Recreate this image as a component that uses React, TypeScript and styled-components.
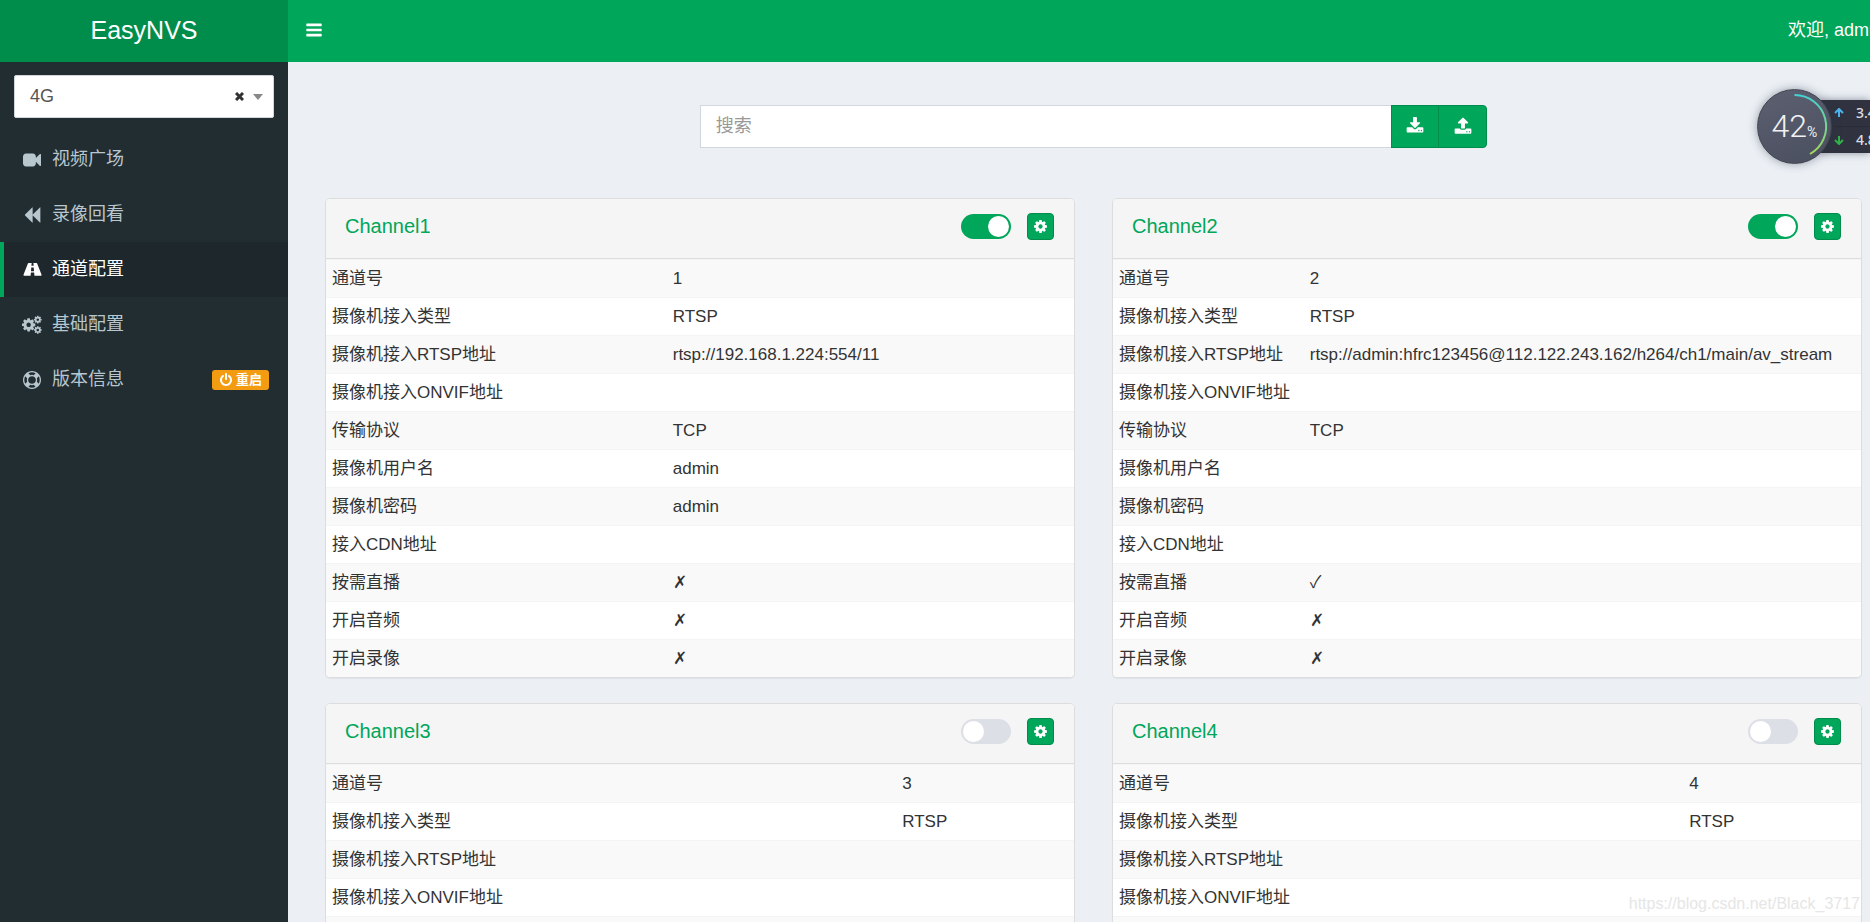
import React, { useState } from 'react';
import styled, { createGlobalStyle, css } from 'styled-components';

const green = '#00a65a';
const darkGreen = '#008d4c';

const GlobalStyle = createGlobalStyle`
  *, *::before, *::after { box-sizing: border-box; }
  html, body { margin: 0; overflow: hidden; }
  body {
    background: #ecf0f5;
    color: #333;
    font: 17px/25px "Liberation Sans", "Noto Sans CJK SC", sans-serif;
  }
  button, input, select { font: inherit; }
  a { text-decoration: none; color: inherit; }
`;

const iconPaths = {
  bars: 'M1664 1344v128q0 26-19 45t-45 19h-1408q-26 0-45-19t-19-45v-128q0-26 19-45t45-19h1408q26 0 45 19t19 45zm0-512v128q0 26-19 45t-45 19h-1408q-26 0-45-19t-19-45v-128q0-26 19-45t45-19h1408q26 0 45 19t19 45zm0-512v128q0 26-19 45t-45 19h-1408q-26 0-45-19t-19-45v-128q0-26 19-45t45-19h1408q26 0 45 19t19 45z',
  cog: 'M1152 896q0-106-75-181t-181-75-181 75-75 181 75 181 181 75 181-75 75-181zm512-109v222q0 12-8 23t-20 13l-185 28q-19 54-39 91 35 50 107 138 10 12 10 25t-9 23q-27 37-99 108t-94 71q-12 0-26-9l-138-108q-44 23-91 38-16 136-29 186-7 28-36 28h-222q-14 0-24.500-8.500t-11.500-21.500l-28-184q-49-16-90-37l-141 107q-10 9-25 9-14 0-25-11-126-114-165-168-7-10-7-23 0-12 8-23 15-21 51-66.500t54-70.500q-27-50-41-99l-183-27q-13-2-21-12.500t-8-23.500v-222q0-12 8-23t19-13l186-28q14-46 39-92-40-57-107-138-10-12-10-24 0-10 9-23 26-36 98.500-107.500t94.500-71.500q13 0 26 10l138 107q44-23 91-38 16-136 29-186 7-28 36-28h222q14 0 24.500 8.500t11.500 21.500l28 184q49 16 90 37l142-107q9-9 24-9 13 0 25 10 129 119 165 170 7 8 7 22 0 12-8 23-15 21-51 66.500t-54 70.500q26 50 41 98l183 28q13 2 21 12.500t8 23.500z',
  video: 'M1792 352v1088q0 42-39 59-13 5-25 5-27 0-45-19l-403-403v166q0 119-84.500 203.500t-203.500 84.500h-704q-119 0-203.500-84.500t-84.500-203.500v-704q0-119 84.500-203.500t203.500-84.500h704q119 0 203.500 84.500t84.500 203.500v165l403-402q18-19 45-19 12 0 25 5 39 17 39 59z',
  backward: 'M1683 141q19-19 32-13t13 32v1472q0 26-13 32t-32-13l-710-710q-9-9-13-19v710q0 26-13 32t-32-13l-710-710q-19-19-19-45t19-45l710-710q19-19 32-13t13 32v710q4-10 13-19z',
  road: 'M1111 1001v-4l-24-320q-1-13-11-22.500t-23-9.500h-186q-13 0-23 9.500t-11 22.500l-24 320v4q-1 12 8 20t21 8h244q12 0 21-8t8-20zm762 407q0 73-46 73h-704q13 0 22-9.500t8-22.500l-20-256q-1-13-11-22.500t-23-9.500h-272q-13 0-23 9.500t-11 22.500l-20 256q-1 13 8 22.500t22 9.500h-704q-46 0-46-73 0-54 26-116l417-1044q8-19 26-33t38-14h339q-13 0-23 9.500t-11 22.500l-15 192q-1 14 8 23t22 9h166q13 0 22-9t8-23l-15-192q-1-13-11-22.500t-23-9.500h339q20 0 38 14t26 33l417 1044q26 62 26 116z',
  ring: 'M896 0q182 0 348 71t286 191 191 286 71 348-71 348-191 286-286 191-348 71-348-71-286-191-191-286-71-348 71-348 191-286 286-191 348-71zm0 128q-190 0-361 90l194 194q82-28 167-28t167 28l194-194q-171-90-361-90zm-678 1129l194-194q-28-82-28-167t28-167l-194-194q-90 171-90 361t90 361zm678 407q190 0 361-90l-194-194q-82 28-167 28t-167-28l-194 194q171 90 361 90zm0-384q159 0 271.500-112.500t112.500-271.500-112.500-271.500-271.500-112.500-271.500 112.500-112.500 271.500 112.500 271.500 271.500 112.500zm484-217l194 194q90-171 90-361t-90-361l-194 194q28 82 28 167t-28 167z',
  power: 'M1664 896q0 156-61 298t-164 245-245 164-298 61-298-61-245-164-164-245-61-298q0-182 80.500-343t226.500-270q43-32 95.500-25t83.500 50q32 42 24.500 94.500t-49.500 84.500q-98 74-151.500 181t-53.500 228q0 104 40.500 198.500t109.500 163.500 163.500 109.500 198.500 40.500 198.500-40.500 163.500-109.500 109.500-163.500 40.500-198.500q0-121-53.500-228t-151.500-181q-42-32-49.500-84.500t24.500-94.500q31-43 84-50t95 25q146 109 226.500 270t80.500 343zm-640-768v640q0 52-38 90t-90 38-90-38-38-90v-640q0-52 38-90t90-38 90 38 38 90z',
  download: 'M1344 1344q0-26-19-45t-45-19-45 19-19 45 19 45 45 19 45-19 19-45zm256 0q0-26-19-45t-45-19-45 19-19 45 19 45 45 19 45-19 19-45zm128-224v320q0 40-28 68t-68 28h-1472q-40 0-68-28t-28-68v-320q0-40 28-68t68-28h465l135 136q58 56 136 56t136-56l136-136h464q40 0 68 28t28 68zm-325-569q17 41-14 70l-448 448q-18 19-45 19t-45-19l-448-448q-31-29-14-70 17-39 59-39h256v-448q0-26 19-45t45-19h256q26 0 45 19t19 45v448h256q42 0 59 39z',
  upload: 'M1344 1472q0-26-19-45t-45-19-45 19-19 45 19 45 45 19 45-19 19-45zm256 0q0-26-19-45t-45-19-45 19-19 45 19 45 45 19 45-19 19-45zm128-224v320q0 40-28 68t-68 28h-1472q-40 0-68-28t-28-68v-320q0-40 28-68t68-28h427q21 56 70.500 92t110.500 36h256q61 0 110.500-36t70.500-92h427q40 0 68 28t28 68zm-325-648q-17 40-59 40h-256v448q0 26-19 45t-45 19h-256q-26 0-45-19t-19-45v-448h-256q-42 0-59-40-17-39 14-69l448-448q18-19 45-19t45 19l448 448q31 30 14 69z',
};

function Icon({ name, size = 18 }: { name: keyof typeof iconPaths; size?: number }) {
  const w = name === 'road' ? 1920 : 1792;
  return (
    <svg width={Math.round((size * w) / 1792)} height={size} viewBox={`0 0 ${w} 1792`} fill="currentColor" aria-hidden="true">
      <path d={iconPaths[name]} />
    </svg>
  );
}

function CogsIcon() {
  return (
    <svg width="20" height="20" viewBox="0 0 2000 2000" fill="currentColor" aria-hidden="true">
      <path d={iconPaths.cog} transform="translate(-115 205) scale(.87)" />
      <path d={iconPaths.cog} transform="translate(1130 20) scale(.5)" />
      <path d={iconPaths.cog} transform="translate(1130 1050) scale(.5)" />
    </svg>
  );
}

/* The page is slightly wider than the window, so its right edge runs out of view. */
const Page = styled.div`
  display: flex;
  width: calc(100vw + 30px);
  height: 100vh;
  overflow: hidden;
`;

const Sidebar = styled.aside`
  flex: 0 0 288px;
  background: #222d32;
  color: #b8c7ce;
`;

const Logo = styled.a`
  display: block;
  height: 62px;
  background: ${darkGreen};
  color: #fff;
  font-size: 25px;
  line-height: 60px;
  text-align: center;
`;

const ServerPicker = styled.div`
  position: relative;
  margin: 13px 14px 14px;
`;

const ServerSelect = styled.select`
  display: block;
  width: 100%;
  height: 43px;
  padding: 0 15px;
  appearance: none;
  border: 1px solid #d2d6de;
  border-radius: 2px;
  background: #fff;
  color: #555;
  font-size: 18px;
`;

const PickerMarks = styled.span`
  position: absolute;
  top: 0;
  right: 11px;
  height: 43px;
  display: flex;
  align-items: center;
  gap: 9px;
  color: #333;
  pointer-events: none;
`;

const Caret = styled.i`
  border: 5px solid transparent;
  border-top: 6px solid #888;
  border-bottom: 0;
`;

const Menu = styled.nav`
  display: flex;
  flex-direction: column;
`;

const MenuItem = styled.div<{ $active?: boolean }>`
  display: flex;
  align-items: center;
  height: 55px;
  padding: 0 19px 0 18px;
  border-left: 4px solid transparent;
  font-size: 18px;
  ${p => p.$active && css`
    border-left-color: ${green};
    background: #1e282c;
    color: #fff;
  `}
`;

const MenuLink = styled.a`
  display: flex;
  align-items: center;
  flex: 1;
  height: 55px;
`;

const MenuIcon = styled.span`
  display: flex;
  justify-content: center;
  width: 20px;
  margin-right: 10px;
`;

const RestartBadge = styled.button`
  display: flex;
  align-items: center;
  gap: 3px;
  height: 20px;
  padding: 0 7px;
  border: 0;
  border-radius: 3px;
  background: #f39c12;
  color: #fff;
  font-size: 13px;
  font-weight: bold;
  line-height: 20px;
`;

const Main = styled.div`
  flex: 1;
  min-width: 0;
`;

const TopBar = styled.header`
  display: flex;
  align-items: center;
  justify-content: space-between;
  height: 62px;
  padding: 0 17px 2px;
  background: ${green};
  color: #fff;
`;

const MenuToggle = styled.button`
  display: flex;
  padding: 0;
  border: 0;
  background: none;
  color: inherit;
`;

const Welcome = styled.a`
  font-size: 18px;
  white-space: nowrap;
`;

const Content = styled.main`
  padding: 43px 38px 0 37px;
`;

const SearchGroup = styled.form`
  display: flex;
  width: calc(50% + 19px);
  height: 43px;
  margin: 0 auto 50px;
`;

const SearchInput = styled.input`
  flex: 1;
  min-width: 0;
  padding: 0 15px;
  border: 1px solid #d2d6de;
  border-right: 0;
  outline: 0;
  font-size: 18px;
  &::placeholder { color: #999; }
`;

const SearchButton = styled.button`
  display: flex;
  align-items: center;
  justify-content: center;
  width: 48px;
  padding: 0 0 2px;
  border: 1px solid ${darkGreen};
  background: ${green};
  color: #fff;
  & + & { width: 49px; margin-left: -1px; border-radius: 0 4px 4px 0; }
`;

const Cards = styled.div`
  display: grid;
  grid-template-columns: repeat(2, minmax(0, 1fr));
  gap: 25px 37px;
`;

const Card = styled.section`
  overflow: hidden;
  border: 1px solid #ddd;
  border-radius: 5px;
  background: #fff;
  box-shadow: 0 1px 1px rgba(0, 0, 0, 0.05);
`;

const CardHeader = styled.header`
  display: flex;
  align-items: center;
  gap: 16px;
  height: 60px;
  padding: 0 20px 5px 19px;
  border-bottom: 1px solid #ddd;
  background: #f5f5f5;
`;

const CardTitle = styled.h2`
  flex: 1;
  margin: 0;
  color: ${green};
  font-size: 20px;
  font-weight: normal;
`;

const Switch = styled.input`
  width: 50px;
  height: 25px;
  margin: 0;
  padding: 2px;
  appearance: none;
  border-radius: 13px;
  background: #dcdfe6;
  &::before {
    content: '';
    display: block;
    width: 21px;
    height: 21px;
    border-radius: 50%;
    background: #fff;
  }
  &:checked { background: ${green}; }
  &:checked::before { margin-left: auto; }
`;

const GearButton = styled.button`
  display: flex;
  align-items: center;
  justify-content: center;
  width: 27px;
  height: 27px;
  padding: 0;
  border: 1px solid ${darkGreen};
  border-radius: 4px;
  background: ${green};
  color: #fff;
`;

const InfoTable = styled.table`
  width: 100%;
  border-collapse: separate;
  border-spacing: 0;
  th, td {
    height: 38px;
    padding: 0 6px;
    border-top: 1px solid #f4f4f4;
    font-weight: normal;
    text-align: left;
    white-space: nowrap;
  }
  tr:nth-child(odd) { background: #f9f9f9; }
`;

const Monitor = styled.aside`
  position: absolute;
  top: 89px;
  right: 0;
  display: flex;
  align-items: center;
  width: 113px;
  height: 75px;
`;

const Dial = styled.div`
  position: relative;
  z-index: 1;
  flex: 0 0 75px;
  height: 75px;
  display: flex;
  align-items: baseline;
  justify-content: center;
  border: 1px solid #40434e;
  border-radius: 50%;
  background: linear-gradient(160deg, #5c6070, #4a4f5f);
  box-shadow: 0 0 10px rgba(40, 50, 70, 0.45);
  color: #f1f1f3;
  font: 300 32px/73px Roboto, sans-serif;
  small { font-size: 14px; font-weight: 400; }
  svg { position: absolute; inset: 0; }
`;

const Speeds = styled.div`
  flex: 1;
  min-width: 0;
  height: 53px;
  margin-left: -12px;
  padding-left: 14px;
  overflow: hidden;
  background: #30333f;
  box-shadow: 0 0 8px rgba(40, 50, 70, 0.5);
`;

const Speed = styled.div`
  display: flex;
  align-items: center;
  gap: 12px;
  height: 26px;
  color: #dcdde2;
  font: 500 14px/26px "Noto Sans", sans-serif;
  white-space: nowrap;
  & + & { border-top: 1px solid #292c36; }
  svg { flex: none; }
`;

const Watermark = styled.span`
  position: absolute;
  right: 10px;
  bottom: 6px;
  color: #e6e6e6;
  font-size: 16px;
  text-shadow: 1px 1px 0 #fff;
  pointer-events: none;
`;

const labels = ['通道号', '摄像机接入类型', '摄像机接入RTSP地址', '摄像机接入ONVIF地址', '传输协议', '摄像机用户名', '摄像机密码', '接入CDN地址', '按需直播', '开启音频', '开启录像'];

interface Channel {
  name: string;
  enabled: boolean;
  values: string[];
}

const channels: Channel[] = [
  { name: 'Channel1', enabled: true, values: ['1', 'RTSP', 'rtsp://192.168.1.224:554/11', '', 'TCP', 'admin', 'admin', '', '✗', '✗', '✗'] },
  { name: 'Channel2', enabled: true, values: ['2', 'RTSP', 'rtsp://admin:hfrc123456@112.122.243.162/h264/ch1/main/av_stream', '', 'TCP', '', '', '', '✓', '✗', '✗'] },
  { name: 'Channel3', enabled: false, values: ['3', 'RTSP', '', '', ''] },
  { name: 'Channel4', enabled: false, values: ['4', 'RTSP', '', '', ''] },
];

const menu = [
  { label: '视频广场', icon: <Icon name="video" /> },
  { label: '录像回看', icon: <Icon name="backward" /> },
  { label: '通道配置', icon: <Icon name="road" />, active: true },
  { label: '基础配置', icon: <CogsIcon /> },
  { label: '版本信息', icon: <Icon name="ring" />, restart: true },
];

function ChannelCard({ channel }: { channel: Channel }) {
  const [enabled, setEnabled] = useState(channel.enabled);
  return (
    <Card>
      <CardHeader>
        <CardTitle>{channel.name}</CardTitle>
        <Switch type="checkbox" role="switch" aria-label={channel.name} checked={enabled} onChange={e => setEnabled(e.target.checked)} />
        <GearButton type="button" aria-label="设置"><Icon name="cog" size={15} /></GearButton>
      </CardHeader>
      <InfoTable>
        <tbody>
          {channel.values.map((value, i) => (
            <tr key={labels[i]}>
              <th scope="row">{labels[i]}</th>
              <td>{value}</td>
            </tr>
          ))}
        </tbody>
      </InfoTable>
    </Card>
  );
}

export default function App() {
  return (
    <>
      <GlobalStyle />
      <Page>
        <Sidebar>
          <Logo href="#">EasyNVS</Logo>
          <ServerPicker>
            <ServerSelect aria-label="4G"><option>4G</option></ServerSelect>
            <PickerMarks>
              <svg width="9" height="9" viewBox="0 0 9 9"><path d="M1 1l7 7M8 1l-7 7" stroke="currentColor" strokeWidth="3" /></svg>
              <Caret />
            </PickerMarks>
          </ServerPicker>
          <Menu>
            {menu.map(item => (
              <MenuItem key={item.label} $active={item.active}>
                <MenuLink href="#"><MenuIcon>{item.icon}</MenuIcon>{item.label}</MenuLink>
                {item.restart && <RestartBadge type="button"><Icon name="power" size={14} />重启</RestartBadge>}
              </MenuItem>
            ))}
          </Menu>
        </Sidebar>
        <Main>
          <TopBar>
            <MenuToggle type="button" aria-label="菜单"><Icon name="bars" /></MenuToggle>
            <Welcome href="#">欢迎, admin</Welcome>
          </TopBar>
          <Content>
            <SearchGroup>
              <SearchInput type="text" placeholder="搜索" aria-label="搜索" />
              <SearchButton type="button" aria-label="下载"><Icon name="download" /></SearchButton>
              <SearchButton type="button" aria-label="上传"><Icon name="upload" /></SearchButton>
            </SearchGroup>
            <Cards>
              {channels.map(c => <ChannelCard key={c.name} channel={c} />)}
            </Cards>
          </Content>
        </Main>
      </Page>
      <Monitor>
        <Dial>
          42<small>%</small>
          <svg viewBox="0 0 73 73" fill="none">
            <defs>
              <linearGradient id="arc" x1="0" y1="0" x2="0" y2="1">
                <stop offset="0" stopColor="#45d2d2" />
                <stop offset="1" stopColor="#a5d65c" />
              </linearGradient>
            </defs>
            <path d="M36.500 5A31.500 31.500 0 0 1 52 64" stroke="url(#arc)" strokeWidth="2" />
          </svg>
        </Dial>
        <Speeds>
          <Speed>
            <svg width="10" height="10" viewBox="0 0 10 10"><path d="M5 9V2M1 5l4-4 4 4" fill="none" stroke="#4cb4ef" strokeWidth="2" /></svg>
            3.4
          </Speed>
          <Speed>
            <svg width="10" height="10" viewBox="0 0 10 10"><path d="M5 1v7M1 5l4 4 4-4" fill="none" stroke="#31b34a" strokeWidth="2" /></svg>
            4.8
          </Speed>
        </Speeds>
      </Monitor>
      <Watermark>https://blog.csdn.net/Black_3717</Watermark>
    </>
  );
}
